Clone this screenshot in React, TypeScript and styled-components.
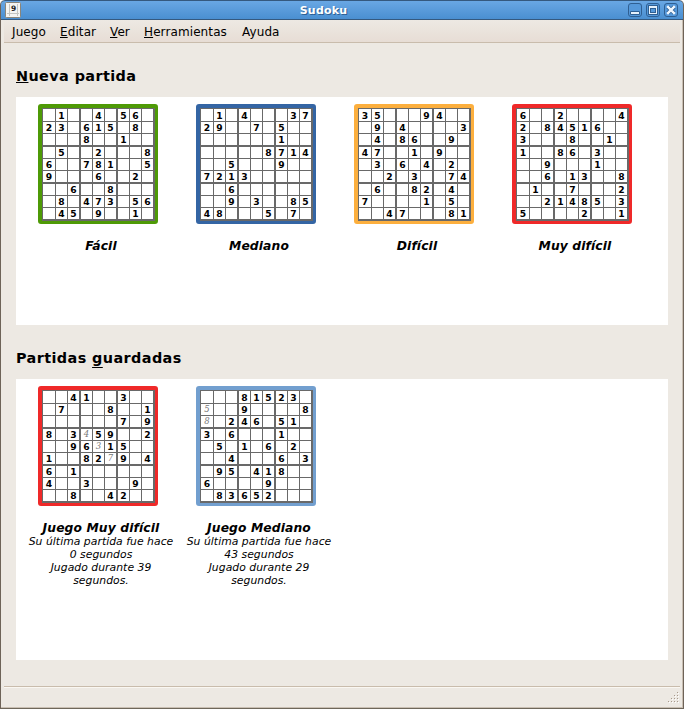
import React from "react";
import styled, { createGlobalStyle } from "styled-components";

const GlobalStyle = createGlobalStyle`
  * { box-sizing: border-box; }
  html, body { margin: 0; padding: 0; background: #fff; }
  body { font-family: "DejaVu Sans", sans-serif; color: #000; overflow: hidden; }
`;

const Window = styled.div`
  display: flex;
  flex-direction: column;
  width: 684px;
  height: 709px;
  border: 1px solid #6e6358;
  border-top: 0;
  border-bottom-color: #6e675a;
  border-radius: 5px 5px 0 0;
  background: #ede9e3;
  box-shadow: inset -1px -1px 0 #c9bfb3;
  overflow: hidden;
`;

const TitleBar = styled.header`
  display: grid;
  grid-template-columns: 70px 1fr 70px;
  align-items: center;
  flex: none;
  height: 20px;
  margin: 0 -1px;
  padding: 0 5px 0 4px;
  border: 1px solid #35597f;
  border-radius: 5px 5px 0 0;
  background: linear-gradient(#69a7e4, #4a8fd1);
`;

const Title = styled.div`
  color: #fff;
  font-size: 11px;
  font-weight: bold;
  line-height: 16px;
  letter-spacing: 0.2px;
  text-align: center;
  padding: 2px 36px 0 0;
  text-shadow: 1px 1px 0 #2f5f92;
`;

const WindowIcon = styled.svg`
  display: block;
  width: 16px;
  height: 16px;
`;

const Controls = styled.div`
  display: flex;
  justify-content: flex-end;
  gap: 4px;
`;

const ControlIcon = styled.svg`
  display: block;
  width: 14px;
  height: 14px;
`;

const MenuBar = styled.nav`
  display: flex;
  flex: none;
  height: 23px;
  margin: 0 3px;
  padding: 1px 0 0 8px;
  gap: 14px;
  border-bottom: 1px solid #c9bcac;
  background: linear-gradient(#ede9e3, #e7ddd5);
`;

const MenuItem = styled.span<{ $width: number }>`
  width: ${(p) => p.$width}px;
  font-size: 12px;
  line-height: 23px;
  letter-spacing: 0.1px;
  white-space: nowrap;
`;

const Mnemonic = styled.span`
  text-decoration: underline;
  text-decoration-thickness: 1px;
  text-decoration-skip-ink: none;
  text-underline-offset: 1px;
`;

const DeepMnemonic = styled(Mnemonic)`
  text-underline-offset: 4px;
`;

const Content = styled.main`
  display: flex;
  flex-direction: column;
  flex: 1;
  padding: 24px 15px 0;
`;

const Heading = styled.h2`
  margin: 0;
  height: 30px;
  font-size: 14.4px;
  font-weight: bold;
  line-height: 18px;
  letter-spacing: 0.41px;
`;

const GamesPanel = styled.section<{ $height: number }>`
  display: flex;
  gap: 8px;
  height: ${(p) => p.$height}px;
  margin-bottom: 24px;
  padding: 7px 10px 0;
  background: #fff;
`;

const Game = styled.article`
  display: flex;
  flex-direction: column;
  align-items: center;
  width: 150px;
`;

const Board = styled.div<{ $color: string }>`
  display: grid;
  grid-template: 36px 35px 35px / 36px 35px 35px;
  gap: 2px;
  flex: none;
  width: 120px;
  height: 120px;
  margin-right: 6px;
  padding: 1px 2px 2px 1px;
  border: 4px solid ${(p) => p.$color};
  border-width: 4px 3px 3px 4px;
  border-radius: 3px;
  background: #696969;
`;

const Box = styled.div`
  display: grid;
  grid-template: 1fr 11px 11px / 1fr 11px 11px;
  gap: 1px;
`;

const Cell = styled.span<{ $pencil?: boolean }>`
  display: flex;
  align-items: center;
  justify-content: center;
  background: #fff;
  color: ${(p) => (p.$pencil ? "#777" : "#000")};
  font-family: ${(p) => (p.$pencil ? '"DejaVu Serif", serif' : '"DejaVu Sans", sans-serif')};
  font-size: ${(p) => (p.$pencil ? 8.5 : 9.2)}px;
  font-weight: ${(p) => (p.$pencil ? "normal" : "bold")};
  font-style: ${(p) => (p.$pencil ? "italic" : "normal")};
  line-height: 11px;
`;

const GameName = styled.h3`
  margin: 15px 0 -1px;
  font-size: 12.3px;
  font-style: italic;
  font-weight: bold;
  line-height: 15px;
  letter-spacing: 0.12px;
  white-space: nowrap;
`;

const Detail = styled.p`
  margin: 0;
  font-size: 10.8px;
  font-style: italic;
  line-height: 13px;
  letter-spacing: 0.04px;
  text-align: center;
  white-space: pre;
`;

const StatusBar = styled.footer`
  display: flex;
  align-items: flex-end;
  justify-content: flex-end;
  flex: none;
  height: 22px;
  margin: 0 3px;
  border-top: 1px solid #c9bcac;
  box-shadow: inset 0 1px 0 #faf7f2;
`;

const Grip = styled.svg`
  display: block;
  width: 12px;
  height: 12px;
  margin: 0 0 4px 0;
`;

type Puzzle = { name: string; color: string; rows: string[]; detail?: string };

// Dots are empty squares; letters a-i are the player's own entries 1-9.
const newGames: Puzzle[] = [
  {
    name: "Fácil",
    color: "#4e9a06",
    rows: [".1..4.56.", "23.615.8.", "...8..1..", ".5..2...8", "6..781..5", "9...6..2.", "..6..8...", ".8.473.56", ".45.9..1."],
  },
  {
    name: "Mediano",
    color: "#3465a4",
    rows: [".1.4...37", "29..7.5..", "......1..", ".....8714", "..5...9..", "7213.....", "..6......", "..9.3..85", "48...5.7."],
  },
  {
    name: "Difícil",
    color: "#fcaf3e",
    rows: ["35...94..", ".9.4....3", ".4.86..9.", "47..1.9..", ".3.6.4.2.", "..2.3..74", ".6..82.4.", "7....1.5.", "..47...81"],
  },
  {
    name: "Muy difícil",
    color: "#ef2929",
    rows: ["6..2....4", "2.84516..", "3...8..1.", "1..86.3..", "..9...1..", "..6.13..8", ".1..7...2", "..21485.3", "5....2..1"],
  },
];

const savedGames: Puzzle[] = [
  {
    name: "Juego Muy difícil",
    color: "#ef2929",
    detail: "Su última partida fue hace\n0 segundos\nJugado durante 39\nsegundos.",
    rows: ["..41..3..", ".7...8..1", "......7.9", "8.3d59..2", "..96c15..", "1..82g9.4", "6.1......", "4..3...9.", "..8..42.."],
  },
  {
    name: "Juego Mediano",
    color: "#729fcf",
    detail: "Su última partida fue hace\n43 segundos\nJugado durante 29\nsegundos.",
    rows: ["...81523.", "e..9....8", "h.246.51.", "3.6...1..", ".5.1.6.2.", "..4...6.3", ".95.418..", "6....9...", ".83652..."],
  },
];

const range = [0, 1, 2, 3, 4, 5, 6, 7, 8];

function SudokuBoard({ rows, color }: { rows: string[]; color: string }) {
  return (
    <Board $color={color}>
      {range.map((box) => (
        <Box key={box}>
          {range.map((i) => {
            const row = Math.floor(box / 3) * 3 + Math.floor(i / 3);
            const ch = rows[row][(box % 3) * 3 + (i % 3)];
            const pencil = ch >= "a" && ch <= "i";
            return (
              <Cell key={i} $pencil={pencil}>
                {ch === "." ? "" : pencil ? ch.charCodeAt(0) - 96 : ch}
              </Cell>
            );
          })}
        </Box>
      ))}
    </Board>
  );
}

function GameList({ games, height }: { games: Puzzle[]; height: number }) {
  return (
    <GamesPanel $height={height}>
      {games.map((g) => (
        <Game key={g.name}>
          <SudokuBoard rows={g.rows} color={g.color} />
          <GameName>{g.name}</GameName>
          {g.detail && <Detail>{g.detail}</Detail>}
        </Game>
      ))}
    </GamesPanel>
  );
}

function ControlButton({ children }: { children: React.ReactNode }) {
  return (
    <ControlIcon viewBox="0 0 14 14">
      <rect x="0.5" y="0.5" width="13" height="13" rx="2.5" fill="#5598da" stroke="#2f5f92" />
      {children}
    </ControlIcon>
  );
}

const gripDots = [
  [9, 0],
  [6, 3], [9, 3],
  [3, 6], [6, 6], [9, 6],
  [0, 9], [3, 9], [6, 9], [9, 9],
];

export default function App() {
  return (
    <>
      <GlobalStyle />
      <Window>
        <TitleBar>
          <WindowIcon viewBox="0 0 16 16">
            <rect x="0.5" y="0.5" width="15" height="15" rx="1" fill="#f4f4f2" stroke="#8a857a" />
            <path d="M2 11.5H14M4.5 2V14M12.5 2V14" stroke="#c4c4c0" fill="none" />
            <text x="6" y="9" fontFamily="DejaVu Sans" fontSize="7.5" fontWeight="bold" fill="#222">9</text>
          </WindowIcon>
          <Title>Sudoku</Title>
          <Controls>
            <ControlButton>
              <path d="M2.5 8.5h9v3h-9z" fill="#e6f1fc" stroke="#2f5f92" />
            </ControlButton>
            <ControlButton>
              <rect x="2" y="2" width="10" height="10" fill="#2f5f92" />
              <rect x="3" y="3" width="8" height="8" fill="#e6f1fc" />
              <rect x="4" y="5" width="6" height="5" fill="#2f5f92" />
              <rect x="5" y="6" width="4" height="3" fill="#5598da" />
            </ControlButton>
            <ControlButton>
              <path d="M3.8 3.8l6.4 6.4M10.2 3.8l-6.4 6.4" stroke="#2f5f92" strokeWidth="4" />
              <path d="M3.2 3.2l7.6 7.6M10.8 3.2l-7.6 7.6" stroke="#f0f6fd" strokeWidth="2.4" />
            </ControlButton>
          </Controls>
        </TitleBar>
        <MenuBar>
          <MenuItem $width={34}>Juego</MenuItem>
          <MenuItem $width={36}><Mnemonic>E</Mnemonic>ditar</MenuItem>
          <MenuItem $width={20}><Mnemonic>V</Mnemonic>er</MenuItem>
          <MenuItem $width={84}><Mnemonic>H</Mnemonic>erramientas</MenuItem>
          <MenuItem $width={38}>Ayuda</MenuItem>
        </MenuBar>
        <Content>
          <Heading><Mnemonic>N</Mnemonic>ueva partida</Heading>
          <GameList games={newGames} height={228} />
          <Heading>Partidas <DeepMnemonic>g</DeepMnemonic>uardadas</Heading>
          <GameList games={savedGames} height={281} />
        </Content>
        <StatusBar>
          <Grip viewBox="0 0 12 12">
            {gripDots.map(([x, y]) => (
              <g key={`${x}-${y}`}>
                <rect x={x + 1} y={y + 1} width="1" height="1" fill="#fff" />
                <rect x={x} y={y} width="1" height="1" fill="#a89a8c" />
              </g>
            ))}
          </Grip>
        </StatusBar>
      </Window>
    </>
  );
}
